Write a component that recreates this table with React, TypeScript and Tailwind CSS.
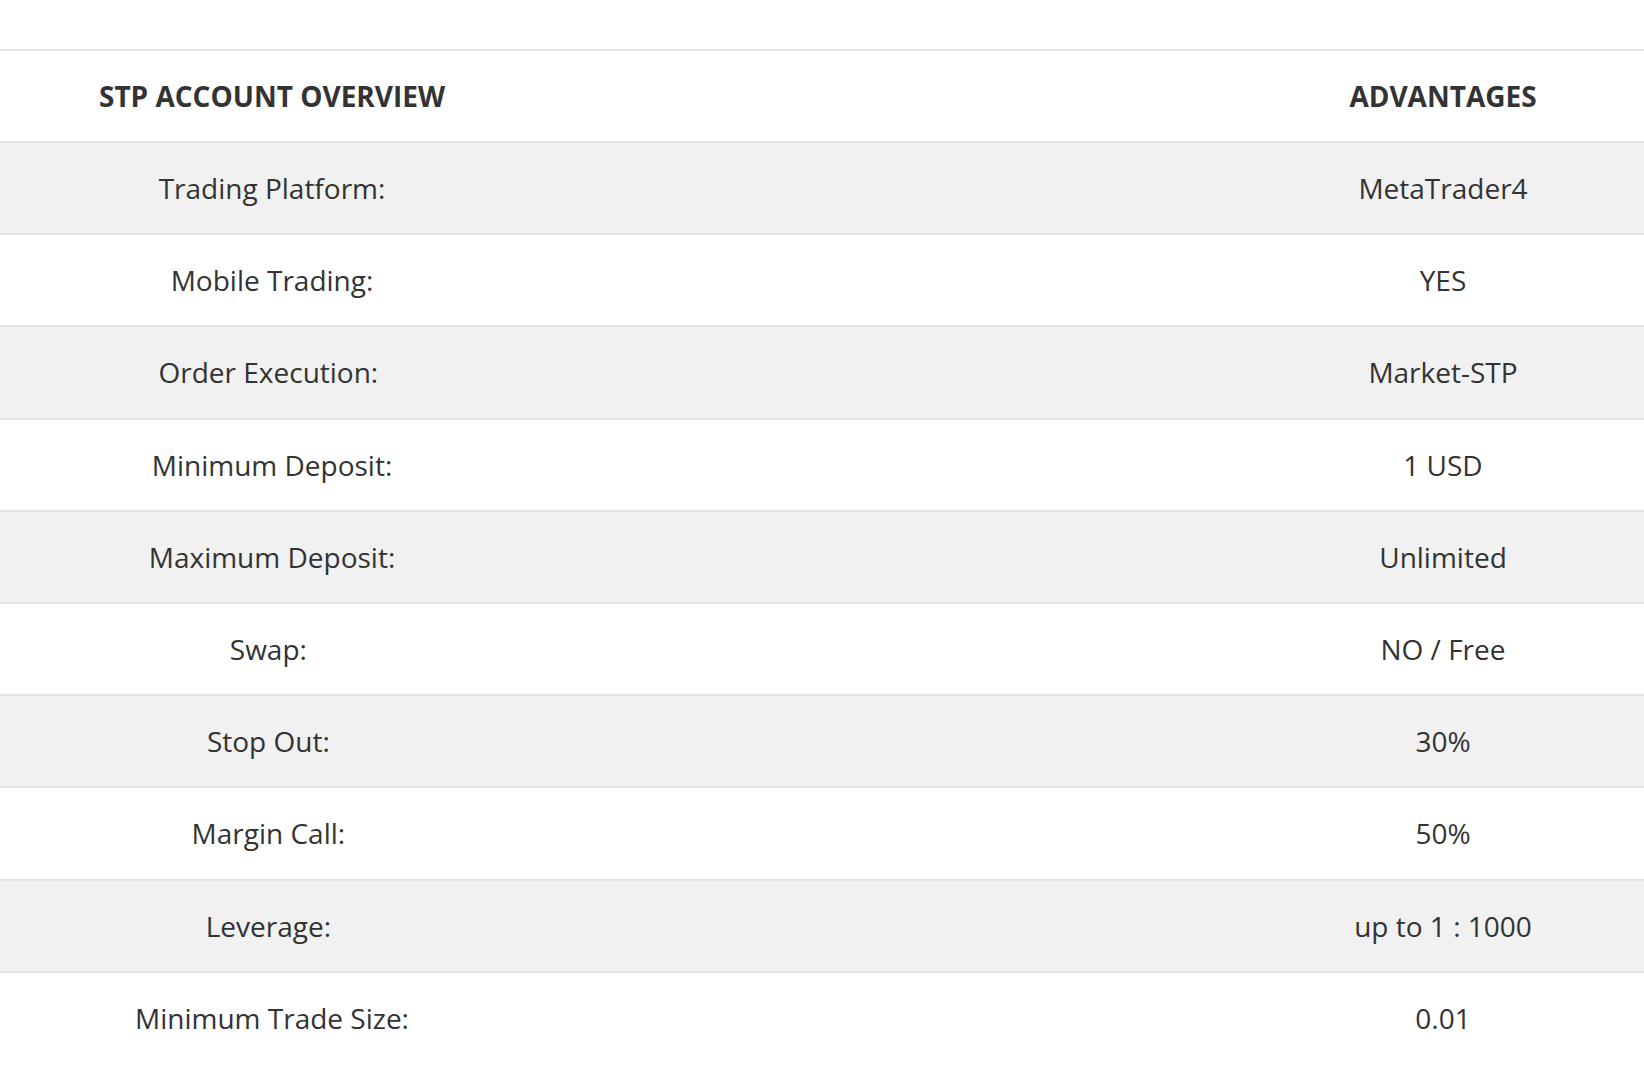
const rows: [string, string][] = [
  ["Trading Platform:", "MetaTrader4"],
  ["Mobile Trading:", "YES"],
  ["Order Execution:\u00a0", "Market-STP"],
  ["Minimum Deposit:", "1 USD"],
  ["Maximum Deposit:", "Unlimited"],
  ["Swap:\u00a0", "NO / Free"],
  ["Stop Out:\u00a0", "30%"],
  ["Margin Call:\u00a0", "50%"],
  ["Leverage:\u00a0", "up to 1 : 1000"],
  ["Minimum Trade Size:", "0.01"],
];

export default function App() {
  return (
    <div className="min-h-screen bg-white pt-[49px] text-[#333333] font-['Open_Sans',sans-serif]">
      <div className="border-t-2 border-[#e4e4e4]">
        {/* header */}
        <div className="grid h-[92px] grid-cols-[544px_1fr_402px] items-center border-b-2 border-[#e2e2e2] text-[28px] font-bold">
          <div className="text-center">STP ACCOUNT OVERVIEW</div>
          <div />
          <div className="text-center">ADVANTAGES</div>
        </div>
        {rows.map(([label, value], i) => (
          <div
            key={label}
            className={`grid h-[92.2px] grid-cols-[544px_1fr_402px] items-center border-[#e4e4e4] text-[28px] ${
              i % 2 === 0 ? "bg-[#f1f1f1]" : "bg-white"
            } ${i < rows.length - 1 ? "border-b-2" : "pb-[2px]"}`}
          >
            <div className="whitespace-pre text-center">{label}</div>
            <div />
            <div className="text-center">{value}</div>
          </div>
        ))}
      </div>
    </div>
  );
}
